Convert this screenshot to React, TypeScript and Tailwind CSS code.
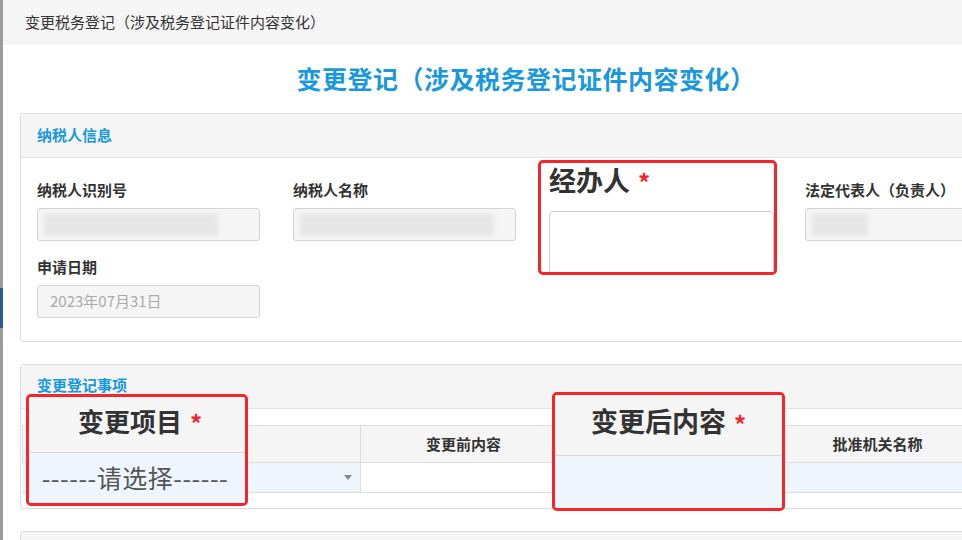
import React from "react";

const FONT = { fontFamily: '"Noto Sans CJK SC", "Noto Sans", sans-serif' };

function Blur({ w }: { w: number }) {
  return (
    <div className="h-full flex items-center px-[6px]">
      <div className="h-[22px] bg-[#e6e6e6] blur-[2px]" style={{ width: w }} />
    </div>
  );
}

function Field({ label, children }: { label: string; children?: React.ReactNode }) {
  return (
    <div className="flex flex-col">
      <div className="h-[20px] leading-[20px] text-[15px] font-bold text-[#333]">{label}</div>
      <div className="mt-[8px] h-[33px] rounded-[3px] border border-[#d4d4d4] bg-[#f5f5f5] text-[15px] text-[#aaa] overflow-hidden">
        {children}
      </div>
    </div>
  );
}

function Star() {
  return <span className="ml-[8px] text-[24px] font-bold text-[#f5262b] leading-none relative top-[2px]">*</span>;
}

export default function App() {
  return (
    <div className="relative w-[962px] h-[540px] overflow-hidden flex bg-white" style={FONT}>
      {/* background window edge */}
      <div className="w-[3px] shrink-0 flex flex-col bg-[#9b9b9b]">
        <div className="h-[288px]" />
        <div className="h-[40px] bg-[#2c5b8e]" />
      </div>

      <div className="flex-1 flex flex-col min-w-0">
        <div className="h-[45px] shrink-0 bg-[#f5f5f5] flex items-center pl-[22px] text-[15px] text-[#333]">
          变更税务登记（涉及税务登记证件内容变化）
        </div>

        <div className="pl-[17px]">
          <div className="w-[1012px]">
            <div className="h-[68px] flex items-center justify-center text-[25px] font-bold text-[#1a98dc] tracking-[0.5px]">
              变更登记（涉及税务登记证件内容变化）
            </div>

            {/* 纳税人信息 */}
            <section className="border border-[#dddddd] rounded-[3px]">
              <div className="h-[44px] bg-[#f5f5f5] border-b border-[#e2e2e2] flex items-center pl-[16px] text-[15px] font-bold text-[#1a98dc]">
                纳税人信息
              </div>
              <div className="pl-[16px] pt-[22px] pb-[23px] grid grid-cols-[223px_223px_223px_223px] gap-x-[33px] gap-y-[16px]">
                <Field label="纳税人识别号">
                  <Blur w={174} />
                </Field>
                <Field label="纳税人名称">
                  <Blur w={194} />
                </Field>
                <Field label="" />
                <Field label="法定代表人（负责人）">
                  <Blur w={56} />
                </Field>
                <Field label="申请日期">
                  <div className="h-full flex items-center pl-[12px]">2023年07月31日</div>
                </Field>
              </div>
            </section>

            {/* 变更登记事项 */}
            <section className="mt-[22px] border border-[#dddddd] rounded-[3px]">
              <div className="h-[44px] bg-[#f5f5f5] border-b border-[#e2e2e2] flex items-center pb-[3px] pl-[16px] text-[15px] font-bold text-[#1a98dc]">
                变更登记事项
              </div>
              <div className="pt-[16px] pb-[15px] pl-[1px]">
                <div className="grid grid-cols-[338px_206px_210px_202px_1fr] border-t border-[#dddddd]">
                  {["", "变更前内容", "", "批准机关名称", ""].map((t, i) => (
                    <div
                      key={i}
                      className="h-[37px] bg-[#f5f5f5] border-l border-b border-[#dddddd] flex items-center justify-center text-[15px] font-bold text-[#333]"
                    >
                      {t}
                    </div>
                  ))}
                  <div className="h-[30px] bg-[#eef5fd] border-b border-[#dddddd] flex items-center justify-end pr-[8px]">
                    <span className="w-0 h-0 border-l-[4px] border-r-[4px] border-t-[5px] border-l-transparent border-r-transparent border-t-[#888]" />
                  </div>
                  <div className="h-[30px] bg-white border-l border-b border-[#dddddd]" />
                  <div className="h-[30px] bg-[#eef5fd] border-l border-b border-[#dddddd]" />
                  <div className="h-[30px] bg-[#eef5fd] border-l border-b border-[#dddddd]" />
                  <div className="h-[30px] bg-[#eef5fd] border-l border-b border-[#dddddd]" />
                </div>
              </div>
            </section>

            <section className="mt-[22px] h-[60px] border border-[#dddddd] rounded-[3px] bg-[#f5f5f5]" />
          </div>
        </div>
      </div>

      {/* 放大标注 */}
      <div className="absolute left-[538px] top-[160px] w-[239px] h-[115px] border-[3px] border-[#f5262b] rounded-[5px] bg-white overflow-hidden pl-[8px]">
        <div className="h-[34px] flex items-center text-[27px] font-bold text-[#333]">
          经办人
          <Star />
        </div>
        <div className="mt-[14px] h-[70px] rounded-[4px] border border-[#cfcfcf] bg-white" />
      </div>

      <div className="absolute left-[26px] top-[394px] w-[222px] h-[112px] border-[3px] border-[#f5262b] rounded-[5px] overflow-hidden flex flex-col">
        <div className="h-[56px] pb-[8px] pl-[6px] bg-[#f5f5f5] border-b border-[#d8d8d8] flex items-center justify-center text-[26px] font-bold text-[#333]">
          变更项目
          <Star />
        </div>
        <div className="flex-1 bg-[#eef5fd] flex items-center justify-center pr-[4px] text-[25px] text-[#555] tracking-[0.5px]">
          ------请选择------
        </div>
      </div>

      <div className="absolute left-[552px] top-[392px] w-[233px] h-[119px] border-[3px] border-[#f5262b] rounded-[5px] overflow-hidden flex flex-col">
        <div className="h-[61px] pb-[7px] bg-[#f5f5f5] border-b border-[#d8d8d8] flex items-center justify-center text-[27px] font-bold text-[#333]">
          变更后内容
          <Star />
        </div>
        <div className="flex-1 bg-[#eef5fd]" />
      </div>
    </div>
  );
}
